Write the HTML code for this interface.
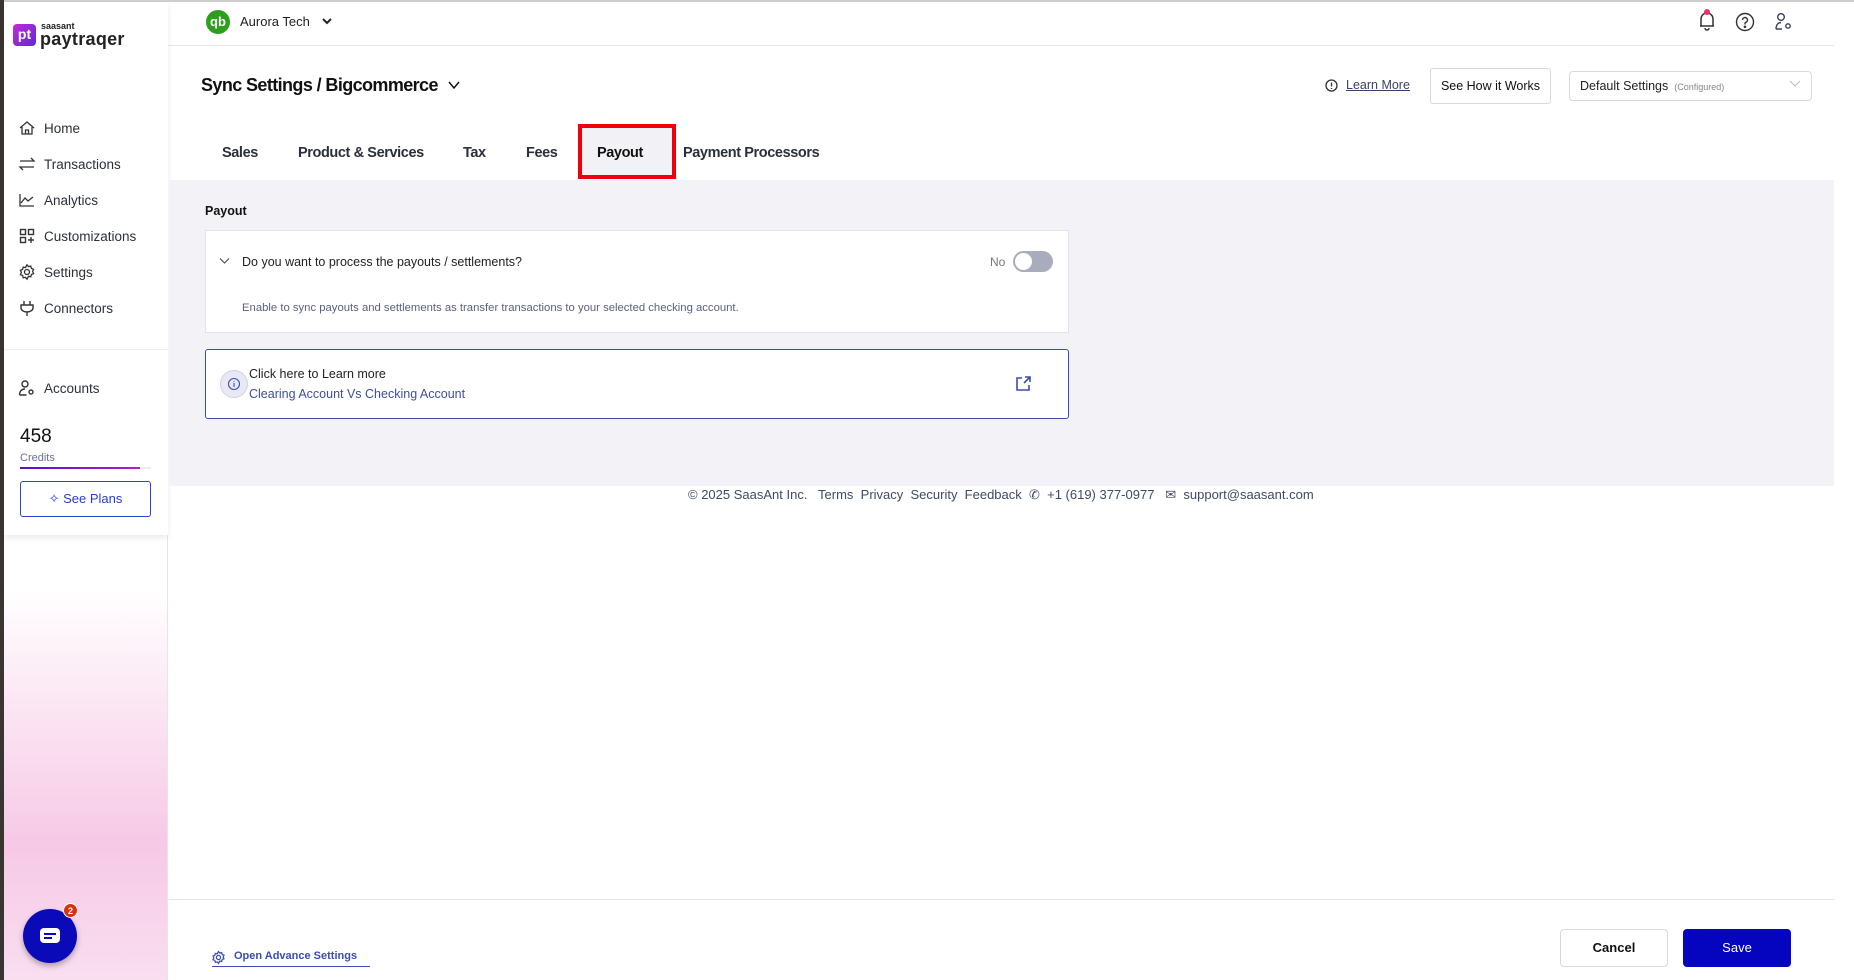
<!DOCTYPE html>
<html><head><meta charset="utf-8"><style>
*{box-sizing:border-box;margin:0;padding:0}
body{width:1854px;height:980px;overflow:hidden;background:#fff;font-family:"Liberation Sans",sans-serif;color:#1a1a1a;position:relative}
.a{position:absolute}
.nav{position:absolute;left:18px;font-size:13.5px;color:#2b2f3a;display:flex;align-items:center}
.nav svg{width:18px;height:18px;margin-right:8px}
.tab{position:absolute;top:145px;font-size:14.5px;color:#2b2f3a;font-weight:bold;letter-spacing:-0.4px}
</style></head><body>
<div class="a" style="left:0;top:0;width:1854px;height:2px;background:#cfcfcf"></div>
<!-- sidebar -->
<div class="a" style="left:0;top:0;width:4px;height:980px;background:#3a3530"></div>
<div class="a" style="left:4px;top:2px;width:164px;height:978px;background:linear-gradient(180deg,#fff 0,#fff 60%,#fbe6f3 72%,#f6c9e6 86%,#f9def0 100%);border-right:1px solid #e6e6ea"></div>
<div class="a" style="left:4px;top:2px;width:164px;height:533px;background:#fff;box-shadow:0 3px 6px rgba(0,0,0,.08)"></div>
<div class="a" style="left:13px;top:24px;width:23px;height:22px;border-radius:4px;background:linear-gradient(135deg,#c42bd6,#5b2bd6);color:#fff;font-weight:bold;font-size:14px;line-height:21px;text-align:center">pt</div>
<div class="a" style="left:41px;top:21px;font-size:9px;font-weight:bold;color:#222">saasant</div>
<div class="a" style="left:40px;top:29px;font-size:18px;font-weight:bold;color:#222;letter-spacing:.3px">paytraqer</div>
<div class="nav" style="top:119px"><svg viewBox="0 0 18 18" fill="none" stroke="#333" stroke-width="1.3"><path d="M2 9L9 3l7 6M4 8v7h10V8M7.5 15v-4h3v4"/></svg>Home</div>
<div class="nav" style="top:155px"><svg viewBox="0 0 18 18" fill="none" stroke="#333" stroke-width="1.3"><path d="M2 6h14l-3-3M16 12H2l3 3"/></svg>Transactions</div>
<div class="nav" style="top:191px"><svg viewBox="0 0 18 18" fill="none" stroke="#333" stroke-width="1.3"><path d="M2 3v12h14M3 12l4-5 3 3 5-4"/></svg>Analytics</div>
<div class="nav" style="top:227px"><svg viewBox="0 0 18 18" fill="none" stroke="#333" stroke-width="1.4"><rect x="2.5" y="2.5" width="5" height="5"/><rect x="10.5" y="2.5" width="5" height="5"/><rect x="2.5" y="10.5" width="5" height="5"/><path d="M13 10v6M10 13h6"/></svg>Customizations</div>
<div class="nav" style="top:263px"><svg viewBox="0 0 18 18" fill="none" stroke="#333" stroke-width="1.3"><circle cx="9" cy="9" r="2.5"/><path d="M9 1.8l1.5 1.8 2.3-.5.6 2.3 2.2.9-1 2.1 1 2.2-2.2.9-.6 2.3-2.3-.5L9 16.2l-1.5-1.9-2.3.5-.6-2.3-2.2-.9 1-2.2-1-2.1 2.2-.9.6-2.3 2.3.5z"/></svg>Settings</div>
<div class="nav" style="top:299px"><svg viewBox="0 0 18 18" fill="none" stroke="#333" stroke-width="1.4"><path d="M6 2v4M12 2v4M3 6h12v3a6 4 0 0 1-12 0zM9 13v4"/></svg>Connectors</div>
<div class="a" style="left:4px;top:349px;width:164px;height:1px;background:#eee"></div>
<div class="nav" style="top:379px"><svg viewBox="0 0 18 18" fill="none" stroke="#333" stroke-width="1.4"><circle cx="7" cy="5" r="3"/><path d="M1.5 16c0-4 2.5-6 5.5-6M1.5 16h7"/><circle cx="13" cy="13" r="2"/></svg>Accounts</div>
<div class="a" style="left:20px;top:426px;font-size:19px;color:#111">458</div>
<div class="a" style="left:20px;top:452px;font-size:11px;color:#6b6f9a">Credits</div>
<div class="a" style="left:20px;top:467px;width:131px;height:2px;background:#eee"></div>
<div class="a" style="left:20px;top:467px;width:120px;height:2px;background:linear-gradient(90deg,#5a0fc8,#b01fc8)"></div>
<div class="a" style="left:20px;top:481px;width:131px;height:36px;border:1px solid #3046c8;border-radius:3px;color:#2a3bc8;font-size:13px;text-align:center;line-height:34px">✧ See Plans</div>
<div class="a" style="left:23px;top:909px;width:54px;height:54px;border-radius:50%;background:#0a0ab8;box-shadow:0 3px 6px rgba(0,0,0,.3)"></div>
<div class="a" style="left:40px;top:928px;width:20px;height:15px;border-radius:4px;background:#fff"></div>
<div class="a" style="left:44px;top:933px;width:12px;height:1.5px;background:#0a0ab8"></div>
<div class="a" style="left:44px;top:937px;width:8px;height:1.5px;background:#0a0ab8"></div>
<div class="a" style="left:63px;top:903px;width:15px;height:15px;border-radius:50%;background:#d8330f;color:#fff;font-size:9px;font-weight:bold;text-align:center;line-height:15px;border:1px solid #fff">2</div>
<!-- top bar -->
<div class="a" style="left:206px;top:10px;width:24px;height:24px;border-radius:50%;background:#2ca01c;color:#fff;font-weight:bold;font-size:13px;text-align:center;line-height:23px">qb</div>
<div class="a" style="left:240px;top:14px;font-size:13px;color:#222">Aurora Tech</div>
<svg class="a" style="left:321px;top:16px" width="12" height="10" viewBox="0 0 12 10" fill="none" stroke="#222" stroke-width="2"><path d="M2 3l4 4 4-4"/></svg>
<div class="a" style="left:168px;top:45px;width:1666px;height:1px;background:#e4e4e8"></div>
<svg class="a" style="left:1697px;top:7px" width="20" height="26" viewBox="0 0 20 26" fill="none" stroke="#333" stroke-width="1.5"><path d="M4 19V12a6 6 0 0 1 12 0v7H3h14M8 21a2 2 0 0 0 4 0"/><circle cx="10" cy="5" r="3" fill="#e8336a" stroke="none"/></svg>
<svg class="a" style="left:1735px;top:12px" width="20" height="20" viewBox="0 0 20 20" fill="none" stroke="#333" stroke-width="1.4"><circle cx="10" cy="10" r="8.5"/><path d="M7.5 8a2.5 2.5 0 1 1 3.5 2.3c-.7.3-1 .8-1 1.5v.7"/><circle cx="10" cy="14.8" r=".6" fill="#333"/></svg>
<svg class="a" style="left:1774px;top:12px" width="20" height="20" viewBox="0 0 20 20" fill="none" stroke="#3a4060" stroke-width="1.4"><circle cx="7" cy="5" r="3.3"/><path d="M2 17c0-4 2-6.5 5-6.5M2 17h6"/><circle cx="14" cy="14" r="2.2"/></svg>
<!-- header -->
<div class="a" style="left:201px;top:75px;font-size:18px;font-weight:bold;color:#111;letter-spacing:-0.6px">Sync Settings / Bigcommerce</div>
<svg class="a" style="left:447px;top:80px" width="14" height="10" viewBox="0 0 14 10" fill="none" stroke="#111" stroke-width="1.5"><path d="M2 2l5 6 5-6"/></svg>
<svg class="a" style="left:1325px;top:79px" width="13" height="13" viewBox="0 0 13 13" fill="none" stroke="#333" stroke-width="1.3"><circle cx="6.5" cy="6.5" r="5.5"/><path d="M6.5 3.5v4M6.5 9v1"/></svg>
<div class="a" style="left:1346px;top:78px;font-size:12.5px;color:#3a4266;text-decoration:underline">Learn More</div>
<div class="a" style="left:1430px;top:68px;width:121px;height:36px;border:1px solid #d8d8e0;border-radius:3px;font-size:12.5px;text-align:center;line-height:34px;color:#111">See How it Works</div>
<div class="a" style="left:1569px;top:71px;width:243px;height:30px;border:1px solid #d8d8e0;border-radius:4px;font-size:12.5px;line-height:28px;padding-left:10px;color:#222">Default Settings <span style="font-size:9px;color:#888">&nbsp;(Configured)</span></div>
<svg class="a" style="left:1789px;top:80px" width="12" height="8" viewBox="0 0 12 8" fill="none" stroke="#bbb" stroke-width="1"><path d="M1 1l5 5 5-5"/></svg>
<!-- tabs -->
<div class="tab" style="left:222px">Sales</div>
<div class="tab" style="left:298px">Product &amp; Services</div>
<div class="tab" style="left:463px">Tax</div>
<div class="tab" style="left:526px">Fees</div>
<div class="a" style="left:578px;top:124px;width:98px;height:55px;border:4px solid #f0000a;background:#f1f1f6"></div>
<div class="tab" style="left:597px;color:#111">Payout</div>
<div class="tab" style="left:683px">Payment Processors</div>
<!-- gray content -->
<div class="a" style="left:169px;top:180px;width:1665px;height:306px;background:#f2f2f7"></div>
<div class="a" style="left:205px;top:204px;font-size:12.5px;font-weight:bold;color:#111">Payout</div>
<div class="a" style="left:205px;top:230px;width:864px;height:103px;background:#fff;border:1px solid #e2e2e8"></div>
<svg class="a" style="left:219px;top:257px" width="11" height="8" viewBox="0 0 11 8" fill="none" stroke="#444" stroke-width="1.1"><path d="M1 1.5l4.5 4.5 4.5-4.5"/></svg>
<div class="a" style="left:242px;top:255px;font-size:12.5px;color:#222">Do you want to process the payouts / settlements?</div>
<div class="a" style="left:990px;top:255px;font-size:12px;color:#777">No</div>
<div class="a" style="left:1013px;top:251px;width:40px;height:21px;border-radius:11px;background:#a9abbf"></div>
<div class="a" style="left:1015px;top:253px;width:17px;height:17px;border-radius:50%;background:#fff"></div>
<div class="a" style="left:242px;top:302px;font-size:11.3px;color:#5a6080">Enable to sync payouts and settlements as transfer transactions to your selected checking account.</div>
<div class="a" style="left:205px;top:349px;width:864px;height:70px;background:#fff;border:1px solid #3a4db0;border-radius:3px"></div>
<div class="a" style="left:220px;top:370px;width:28px;height:28px;border-radius:50%;background:#e8e9f5;border:1px solid #d0d3e8"></div>
<svg class="a" style="left:227px;top:377px" width="14" height="14" viewBox="0 0 14 14" fill="none" stroke="#3a4db0" stroke-width="1.1"><circle cx="7" cy="7" r="5.5"/><path d="M7 6v4M7 4v.8"/></svg>
<div class="a" style="left:249px;top:367px;font-size:12.5px;color:#222">Click here to Learn more</div>
<div class="a" style="left:249px;top:387px;font-size:12.5px;color:#3f4f9a">Clearing Account Vs Checking Account</div>
<svg class="a" style="left:1015px;top:375px" width="17" height="17" viewBox="0 0 17 17" fill="none" stroke="#3a4db0" stroke-width="1.6"><path d="M7 3H2v12h12v-5M9 8l6-6M10 2h5v5"/></svg>
<!-- footer -->
<div class="a" style="left:688px;top:487px;font-size:13px;color:#3f4a66;white-space:nowrap">© 2025 SaasAnt Inc. &nbsp; Terms &nbsp;Privacy &nbsp;Security &nbsp;Feedback &nbsp;✆ &nbsp;+1 (619) 377-0977 &nbsp;&nbsp;✉ &nbsp;support@saasant.com</div>
<div class="a" style="left:169px;top:899px;width:1665px;height:1px;background:#e4e4e8"></div>
<svg class="a" style="left:211px;top:950px" width="15" height="15" viewBox="0 0 18 18" fill="none" stroke="#3a4db0" stroke-width="1.5"><circle cx="9" cy="9" r="2.5"/><path d="M9 1.8l1.5 1.8 2.3-.5.6 2.3 2.2.9-1 2.1 1 2.2-2.2.9-.6 2.3-2.3-.5L9 16.2l-1.5-1.9-2.3.5-.6-2.3-2.2-.9 1-2.2-1-2.1 2.2-.9.6-2.3 2.3.5z"/></svg>
<div class="a" style="left:234px;top:950px;font-size:11px;font-weight:bold;color:#3a4db0">Open Advance Settings</div>
<div class="a" style="left:212px;top:966px;width:158px;height:1px;background:#3a4db0"></div>
<div class="a" style="left:1560px;top:929px;width:108px;height:38px;border:1px solid #d8d8e4;border-radius:4px;font-size:13px;font-weight:bold;text-align:center;line-height:36px;color:#111">Cancel</div>
<div class="a" style="left:1683px;top:929px;width:108px;height:38px;background:#0505c0;border-radius:4px;font-size:13px;text-align:center;line-height:38px;color:#fff">Save</div>
</body></html>
